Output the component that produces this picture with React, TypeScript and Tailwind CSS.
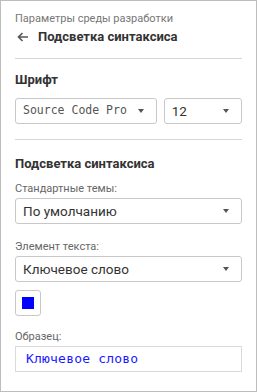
import React from 'react'

const Caret = () => (
  <svg width="6" height="4" viewBox="0 0 6 4" className="shrink-0">
    <path d="M0 0h6L3 4z" fill="#555" />
  </svg>
)

const Select = ({ value, mono = false, className = '' }: { value: string; mono?: boolean; className?: string }) => (
  <div
    className={`h-[26px] flex items-center justify-between pl-[7px] pr-[12px] border border-[#c8c8c8] rounded-[3px] bg-white ${className}`}
  >
    <span
      className={
        mono
          ? "text-[11.5px] text-[#555] font-['DejaVu_Sans_Mono',monospace]"
          : 'text-[13.5px] text-[#333]'
      }
    >
      {value}
    </span>
    <Caret />
  </div>
)

const Label = ({ children }: { children: React.ReactNode }) => (
  <div className="text-[11px] text-[#666] leading-none mb-[4px]">{children}</div>
)

export default function App() {
  return (
    <div className="w-[257px] h-[392px] bg-white border border-[#bdbdbd] font-['Roboto',sans-serif] px-[14px] flex flex-col">
      {/* header */}
      <div className="pt-[12px] text-[11px] text-[#777] leading-none">Параметры среды разработки</div>
      <div className="flex items-center gap-[9px] mt-[3px] h-[20px]">
        <svg width="12" height="10" viewBox="0 0 12 10" className="ml-[2px]">
          <path d="M11 5H1.5M5.5 1L1.5 5l4 4" stroke="#555" strokeWidth="1.6" fill="none" />
        </svg>
        <span className="text-[13px] font-bold text-[#333]">Подсветка синтаксиса</span>
      </div>
      <div className="border-t border-[#d6d6d6] mt-[11px]" />

      {/* font */}
      <div className="text-[13px] font-bold text-[#333] mt-[14px] leading-none">Шрифт</div>
      <div className="flex gap-[7px] mt-[12px]">
        <Select value="Source Code Pro" mono className="w-[143px]" />
        <Select value="12" className="w-[79px]" />
      </div>
      <div className="border-t border-[#d6d6d6] mt-[15px]" />

      {/* syntax highlighting */}
      <div className="text-[13px] font-bold text-[#333] mt-[17px] leading-none">Подсветка синтаксиса</div>
      <div className="mt-[13px]">
        <Label>Стандартные темы:</Label>
        <Select value="По умолчанию" />
      </div>
      <div className="mt-[17px]">
        <Label>Элемент текста:</Label>
        <Select value="Ключевое слово" />
      </div>
      <div className="mt-[8px] w-[26px] h-[26px] border border-[#c8c8c8] rounded-[3px] flex items-center justify-center">
        <div className="w-[12px] h-[12px] bg-[#0000ff]" />
      </div>
      <div className="mt-[15px]">
        <Label>Образец:</Label>
        <div className="h-[26px] border border-[#dadada] flex items-center pl-[10px]">
          <span className="text-[13px] text-[#1a1aff] font-['DejaVu_Sans_Mono',monospace] tracking-[0.2px]">Ключевое слово</span>
        </div>
      </div>
    </div>
  )
}
